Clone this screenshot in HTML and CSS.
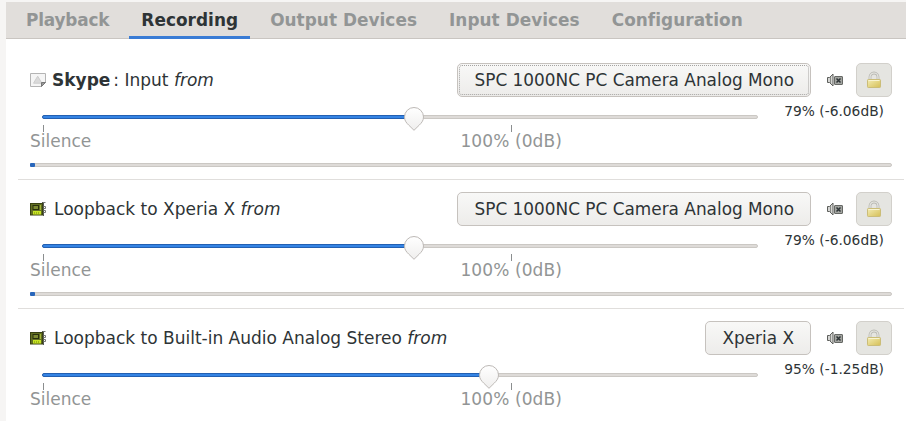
FILE: index.html
```
<!DOCTYPE html>
<html lang="en">
<head>
<meta charset="utf-8">
<title>Volume Control</title>
<link rel="stylesheet" href="styles.css">
</head>
<body>
<svg class="defs" width="0" height="0" aria-hidden="true">
  <defs>
    <linearGradient id="thumb-fill" x1="0" y1="0" x2="0" y2="1"><stop offset="0" stop-color="#fff"/><stop offset="1" stop-color="#efeeed"/></linearGradient>
    <linearGradient id="gold" x1="0" y1="0" x2="1" y2="1"><stop offset="0" stop-color="#f4edb4"/><stop offset="1" stop-color="#d5bf56"/></linearGradient>
  </defs>
  <symbol id="thumb" viewBox="0 0 22 26">
    <path d="M11 1.500a9.500 9.500 0 0 1 9.500 9.500c0 4-2.200 6-4.300 8.200L11 24.300 5.800 19.200C3.700 17 1.500 15 1.500 11A9.500 9.500 0 0 1 11 1.500z" fill="url(#thumb-fill)" stroke="#bdb9b6"/>
  </symbol>
  <symbol id="mute" viewBox="0 0 18 14">
    <path d="M1.500 4.500h2L7 1v12L3.500 9.500h-2z" fill="#d5d5d3" stroke="#5c5e5b"/>
    <path d="M4.500 4v6" stroke="#888a85"/>
    <rect x="8.500" y="3.500" width="8" height="8" rx=".5" fill="#a2a4a0" stroke="#666865"/>
    <path d="M10.500 5.500l4 4m0-4l-4 4" stroke="#2e3436" stroke-width="1.500"/>
  </symbol>
  <symbol id="lock" viewBox="0 0 16 18">
    <path d="M4 9V6a4 4 0 0 1 8 0v3" fill="none" stroke="#b9b9b3" stroke-width="2.800"/>
    <path d="M4 9V6a4 4 0 0 1 8 0v3" fill="none" stroke="#e8e8e4" stroke-width="1.200"/>
    <rect x="1.500" y="8.500" width="13" height="8" rx=".8" fill="url(#gold)" stroke="#cbbd78"/>
    <path d="M2.500 9.500h11" stroke="#f8f4d2"/>
  </symbol>
  <symbol id="page" viewBox="0 0 16 14">
    <path d="M.5.500h15v9l-4 4H.5z" fill="#f5f5f5" stroke="#b4b4b4"/>
    <path d="M7.700 3.200l4.200 7H3.500z" fill="#dadada" stroke="#cdcdcd"/>
    <path d="M15.500 9.500l-4 4v-4z" fill="#999" stroke="#777"/>
  </symbol>
  <symbol id="card" viewBox="0 0 16 15">
    <rect x=".5" y="1.500" width="12" height="11.500" fill="#626f22" stroke="#384112"/>
    <rect x="3" y="3.500" width="5.500" height="4" fill="#7d8b32" stroke="#29300f"/>
    <path d="M10.500 3v5" stroke="#a4b635"/>
    <path d="M3 9h8v3.500H3z" fill="#c8e524"/>
    <path d="M4.500 10v3m2-3v3m2-3v3" stroke="#89a016" stroke-width=".7"/>
    <path d="M12 .5h1.500v13.500" fill="none" stroke="#555753"/>
    <path d="M13.500.500h2m-2 4h2v2h-2m0 2h2v2h-2" fill="none" stroke="#777975"/>
  </symbol>
</svg>
<div class="window">
  <nav class="tabs">
    <a class="tab first">Playback</a>
    <a class="tab active">Recording</a>
    <a class="tab">Output Devices</a>
    <a class="tab">Input Devices</a>
    <a class="tab">Configuration</a>
  </nav>
  <main class="streams">
    <section class="stream">
      <header class="head">
        <svg class="app page"><use href="#page"/></svg>
        <span class="title skype"><b>Skype</b><span class="detail">: Input <i>from</i></span></span>
        <button class="device focused">SPC 1000NC PC Camera Analog Mono</button>
        <svg class="mute"><use href="#mute"/></svg>
        <button class="lock"><svg><use href="#lock"/></svg></button>
      </header>
      <div class="volume">
        <div class="scale" style="--value: 372px"><div class="track"><div class="fill"></div><svg class="thumb"><use href="#thumb"/></svg></div>
          <div class="ticks"><span></span><span></span></div>
          <div class="labels"><span>Silence</span><span class="full">100% (0dB)</span></div>
        </div>
        <span class="percent">79% (-6.06dB)</span>
      </div>
      <div class="level"></div>
    </section>
    <section class="stream">
      <header class="head">
        <svg class="app"><use href="#card"/></svg>
        <span class="title">Loopback to Xperia X <i>from</i></span>
        <button class="device">SPC 1000NC PC Camera Analog Mono</button>
        <svg class="mute"><use href="#mute"/></svg>
        <button class="lock"><svg><use href="#lock"/></svg></button>
      </header>
      <div class="volume">
        <div class="scale" style="--value: 372px"><div class="track"><div class="fill"></div><svg class="thumb"><use href="#thumb"/></svg></div>
          <div class="ticks"><span></span><span></span></div>
          <div class="labels"><span>Silence</span><span class="full">100% (0dB)</span></div>
        </div>
        <span class="percent">79% (-6.06dB)</span>
      </div>
      <div class="level"></div>
    </section>
    <section class="stream">
      <header class="head">
        <svg class="app"><use href="#card"/></svg>
        <span class="title">Loopback to Built-in Audio Analog Stereo <i>from</i></span>
        <button class="device">Xperia X</button>
        <svg class="mute"><use href="#mute"/></svg>
        <button class="lock"><svg><use href="#lock"/></svg></button>
      </header>
      <div class="volume">
        <div class="scale" style="--value: 447px"><div class="track"><div class="fill"></div><svg class="thumb"><use href="#thumb"/></svg></div>
          <div class="ticks"><span></span><span></span></div>
          <div class="labels"><span>Silence</span><span class="full">100% (0dB)</span></div>
        </div>
        <span class="percent">95% (-1.25dB)</span>
      </div>
      <div class="level"></div>
    </section>
  </main>
</div>
</body>
</html>
```
FILE: styles.css
```
* { box-sizing: border-box; }
body {
  margin: 0;
  height: 421px;
  overflow: hidden;
  background: #f6f5f4;
  color: #2e3436;
  font: 17px/20px "DejaVu Sans", sans-serif;
}
.defs { position: absolute; }
.window { margin: 2px 0 0 6px; height: 419px; overflow: hidden; background: #fff; }
.tabs {
  display: flex;
  gap: 8px;
  height: 37px;
  padding-left: 8px;
  background: #e1dedb;
  border-bottom: 1px solid #c9c5c1;
}
.tab {
  height: 37px;
  padding: 8px 12px 0;
  color: #929595;
  font-size: 16.9px;
  font-weight: bold;
  letter-spacing: 0.04px;
  white-space: nowrap;
}
.tab.first { letter-spacing: -0.18px; }
.tab.active { color: #2e3436; border-bottom: 3px solid #3a7cd5; }
.streams { padding: 12px 2px 0 12px; }
.stream { height: 129px; padding: 12px 12px 0; border-bottom: 1px solid #e0dedc; }
.head { display: flex; align-items: center; height: 34px; }
.app { width: 16px; height: 15px; margin-right: 8px; flex: none; }
.app.page { height: 14px; margin-right: 6px; }
.title { flex: 1; white-space: nowrap; }
.detail { margin-left: 3px; }
.device {
  height: 34px;
  padding: 0 16px;
  border: 1px solid #c6c2be;
  border-radius: 5px;
  background: linear-gradient(#f8f8f7, #edecea);
  color: #2e3436;
  font: inherit;
  font-size: 16.9px;
  white-space: nowrap;
}
.device.focused { outline: 1px dotted #a5a4a2; outline-offset: -3px; }
.mute { width: 18px; height: 14px; margin: 0 12px 0 15px; flex: none; }
.lock {
  display: grid;
  place-items: center;
  width: 36px;
  height: 34px;
  padding: 0;
  border: 1px solid #d2d0cb;
  border-radius: 5px;
  background: #e5e5e1;
}
.lock svg { width: 16px; height: 18px; }
.volume { display: flex; height: 66px; }
.scale { width: 728px; padding-top: 18px; }
.track {
  position: relative;
  height: 4px;
  margin-left: 12px;
  border: 1px solid #cbc8c4;
  border-radius: 2px;
  background: #dedbd8;
}
.fill {
  width: var(--value);
  height: 4px;
  margin: -1px;
  border: 1px solid #2360b2;
  border-radius: 2px;
  background: #3584e4;
}
.thumb { position: absolute; left: calc(var(--value) - 12px); top: -10px; width: 22px; height: 26px; }
.ticks { display: flex; gap: 467px; height: 6px; margin: 6px 0 0 13px; }
.ticks span { width: 1px; height: 7px; background: #8b8e8f; }
.labels { display: flex; justify-content: space-between; width: 532px; color: #929595; }
.full { letter-spacing: 0.1px; }
.percent { margin-left: auto; padding: 4px 8px 0 0; font-size: 13.8px; white-space: nowrap; }
.level {
  height: 4px;
  border: 1px solid #cbc8c4;
  border-radius: 2px;
  background: #dedbd8;
}
.level::before { content: ""; display: block; width: 5px; height: 4px; margin: -1px; border-radius: 1px; background: #2866bb; }
```
